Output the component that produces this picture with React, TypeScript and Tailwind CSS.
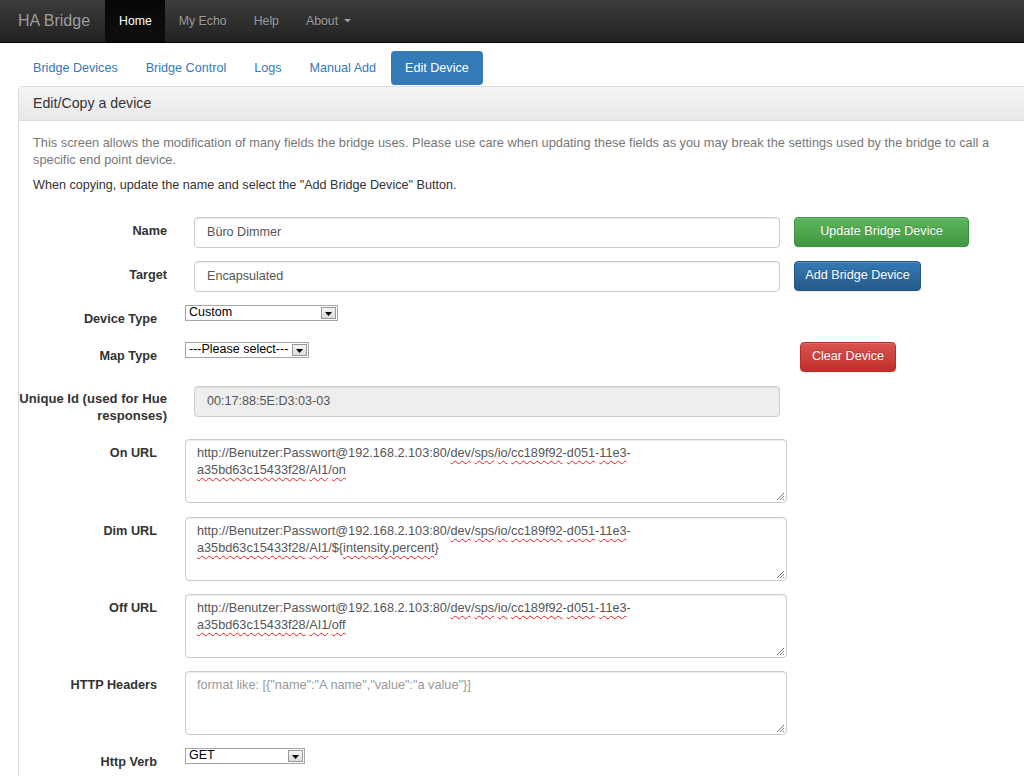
import React from "react";

const Sq = ({ children }: { children: React.ReactNode }) => (
  <span className="underline decoration-wavy decoration-[#e02020] decoration-1 underline-offset-[3px]">{children}</span>
);

const Select = ({ w, value }: { w: number; value: string }) => (
  <div
    className="relative h-[16px] border border-[#a6a6a6] bg-white flex items-center text-[12.5px] leading-[14px] text-black pl-[3px]"
    style={{ width: w }}
  >
    <span className="whitespace-nowrap -mt-[2px]">{value}</span>
    <div className="absolute right-[1px] top-[1px] w-[15px] h-[12px] border border-[#9a9a9a] bg-linear-to-b from-[#f4f4f4] to-[#dcdcdc] flex items-end justify-center pb-[2px]">
      <svg width="7" height="4" viewBox="0 0 7 4">
        <path d="M0 0 H7 L3.5 4 Z" fill="#000" />
      </svg>
    </div>
  </div>
);

const Resize = () => (
  <svg className="absolute right-[2px] bottom-[2px]" width="8" height="8" viewBox="0 0 8 8">
    <path d="M8 1 L1 8 M8 4 L4 8 M8 7 L7 8" stroke="#777" strokeWidth="1" />
  </svg>
);

const Area = ({ children, placeholder }: { children?: React.ReactNode; placeholder?: string }) => (
  <div className="relative w-[602px] h-[64px] bg-white border border-[#ccc] rounded-[4px] shadow-[inset_0_1px_1px_rgba(0,0,0,0.075)] pl-[11px] pt-[5px] text-[12.7px] leading-[17px] text-[#555] whitespace-nowrap">
    {placeholder ? <div className="text-[#999]">{placeholder}</div> : children}
    <Resize />
  </div>
);

const Input = ({ value, disabled }: { value: string; disabled?: boolean }) => (
  <div
    className={
      "w-[586px] h-[31px] border border-[#ccc] rounded-[4px] shadow-[inset_0_1px_1px_rgba(0,0,0,0.075)] flex items-center pl-[12px] pb-[1px] text-[12.6px] text-[#555] " +
      (disabled ? "bg-[#eee]" : "bg-white")
    }
  >
    {value}
  </div>
);

const Row = ({
  h,
  label,
  ml,
  children,
  button,
}: {
  h: number;
  label: React.ReactNode;
  ml: number;
  children: React.ReactNode;
  button?: React.ReactNode;
}) => (
  <div className="flex" style={{ height: h }}>
    <div
      className="w-[148px] shrink-0 text-right font-bold text-[12.7px] leading-[17px] text-[#333] pt-[5.5px] whitespace-nowrap"
      style={{ paddingRight: ml === 18 ? 10 : 0 }}
    >
      {label}
    </div>
    <div className="w-[627px] shrink-0" style={{ paddingLeft: ml }}>
      {children}
    </div>
    <div>{button}</div>
  </div>
);

const Btn = ({ kind, w, children }: { kind: "success" | "primary" | "danger"; w: number; children: React.ReactNode }) => {
  const cls =
    kind === "success"
      ? "from-[#5cb85c] to-[#419641] border-[#3e8f3e]"
      : kind === "primary"
      ? "from-[#337ab7] to-[#265a88] border-[#245580]"
      : "from-[#d9534f] to-[#c12e2a] border-[#b92c28]";
  return (
    <div
      className={
        "h-[30px] rounded-[4px] border bg-linear-to-b text-white text-[12.6px] flex items-center justify-center pb-[1px] [text-shadow:0_-1px_0_rgba(0,0,0,0.2)] shadow-[inset_0_1px_0_rgba(255,255,255,0.15),0_1px_1px_rgba(0,0,0,0.075)] " +
        cls
      }
      style={{ width: w }}
    >
      {children}
    </div>
  );
};

const url1 = (
  <>
    http://Benutzer:Passwort@192.168.2.103:80/<Sq>dev</Sq>/<Sq>sps</Sq>/<Sq>io</Sq>/<Sq>cc189f92</Sq>-<Sq>d051</Sq>-<Sq>11e3</Sq>-
  </>
);

export default function App() {
  return (
    <div className="w-[1024px] h-[776px] overflow-hidden bg-white font-['Liberation_Sans',Arial,sans-serif] text-[#333]">
      {/* navbar */}
      <div className="h-[43px] bg-linear-to-b from-[#3c3c3c] to-[#222] border-b border-black flex items-stretch text-[12.3px]">
        <div className="w-[105px] pl-[18px] flex items-center text-[16px] text-[#9d9d9d]">HA Bridge</div>
        <div className="flex items-center pl-[14px] pr-[13px] bg-linear-to-b from-[#080808] to-[#0f0f0f] shadow-[inset_0_3px_9px_rgba(0,0,0,0.25)] text-white [text-shadow:0_-1px_0_rgba(0,0,0,0.25)]">
          Home
        </div>
        <div className="flex items-center pl-[14px] pr-[13px] text-[#9d9d9d] [text-shadow:0_1px_0_rgba(0,0,0,0.25)]">My Echo</div>
        <div className="flex items-center pl-[14px] pr-[13px] text-[#9d9d9d] [text-shadow:0_1px_0_rgba(0,0,0,0.25)]">Help</div>
        <div className="flex items-center pl-[14px] pr-[13px] text-[#9d9d9d] [text-shadow:0_1px_0_rgba(0,0,0,0.25)]">
          About
          <svg className="ml-[6px]" width="7" height="4" viewBox="0 0 7 4">
            <path d="M0 0 H7 L3.5 3.5 Z" fill="#9d9d9d" />
          </svg>
        </div>
      </div>

      {/* pills */}
      <div className="mt-[8px] ml-[20px] flex gap-[2px] text-[12.6px] text-[#337ab7]">
        <div className="h-[34px] px-[13px] flex items-center rounded-[4px]">Bridge Devices</div>
        <div className="h-[34px] px-[13px] flex items-center rounded-[4px]">Bridge Control</div>
        <div className="h-[34px] px-[13px] flex items-center rounded-[4px]">Logs</div>
        <div className="h-[34px] px-[13px] flex items-center rounded-[4px]">Manual Add</div>
        <div className="h-[34px] px-[14px] flex items-center rounded-[4px] bg-[#337ab7] text-white">Edit Device</div>
      </div>

      {/* panel */}
      <div className="mt-[1px] ml-[18px] w-[1040px] h-[720px] border border-[#ddd] rounded-[4px]">
        <div className="h-[34px] bg-linear-to-b from-[#f5f5f5] to-[#e8e8e8] border-b border-[#ddd] rounded-t-[4px] flex items-center pl-[14px] text-[14.2px] text-[#333]">
          Edit/Copy a device
        </div>
        <div className="pt-[13px]">
          <p className="pl-[14px] w-[995px] text-[12.8px] leading-[17px] text-[#777]">
            This screen allows the modification of many fields the bridge uses. Please use care when updating these fields as you may break the settings used by the bridge to call a specific end point device.
          </p>
          <p className="pl-[14px] mt-[8.5px] text-[12.6px] leading-[17px] text-[#333]">
            When copying, update the name and select the "Add Bridge Device" Button.
          </p>

          <div className="mt-[23.5px]">
            <Row h={44} label="Name" ml={27} button={<Btn kind="success" w={175}>Update Bridge Device</Btn>}>
              <Input value="Büro Dimmer" />
            </Row>
            <Row h={44} label="Target" ml={27} button={<Btn kind="primary" w={127}>Add Bridge Device</Btn>}>
              <Input value="Encapsulated" />
            </Row>
            <Row h={37} label="Device Type" ml={18}>
              <Select w={153} value="Custom" />
            </Row>
            <Row
              h={44}
              label="Map Type"
              ml={18}
              button={
                <div className="ml-[6px]">
                  <Btn kind="danger" w={96}>Clear Device</Btn>
                </div>
              }
            >
              <Select w={124} value="---Please select---" />
            </Row>
            <Row
              h={53}
              label={
                <div className="-mt-[2px] text-[13.1px]">
                  Unique Id (used for Hue
                  <br />
                  responses)
                </div>
              }
              ml={27}
            >
              <Input value="00:17:88:5E:D3:03-03" disabled />
            </Row>
            <Row h={78} label="On URL" ml={18}>
              <Area>
                <div>{url1}</div>
                <div>
                  <Sq>a35bd63c15433f28</Sq>/<Sq>AI1</Sq>/<Sq>on</Sq>
                </div>
              </Area>
            </Row>
            <Row h={77} label="Dim URL" ml={18}>
              <Area>
                <div>{url1}</div>
                <div>
                  <Sq>a35bd63c15433f28</Sq>/<Sq>AI1</Sq>/${"{"}
                  <Sq>intensity.percent</Sq>
                  {"}"}
                </div>
              </Area>
            </Row>
            <Row h={77} label="Off URL" ml={18}>
              <Area>
                <div>{url1}</div>
                <div>
                  <Sq>a35bd63c15433f28</Sq>/<Sq>AI1</Sq>/<Sq>off</Sq>
                </div>
              </Area>
            </Row>
            <Row h={77} label="HTTP Headers" ml={18}>
              <Area placeholder={'format like: [{"name":"A name","value":"a value"}]'} />
            </Row>
            <Row h={40} label="Http Verb" ml={18}>
              <Select w={120} value="GET" />
            </Row>
          </div>
        </div>
      </div>
    </div>
  );
}
